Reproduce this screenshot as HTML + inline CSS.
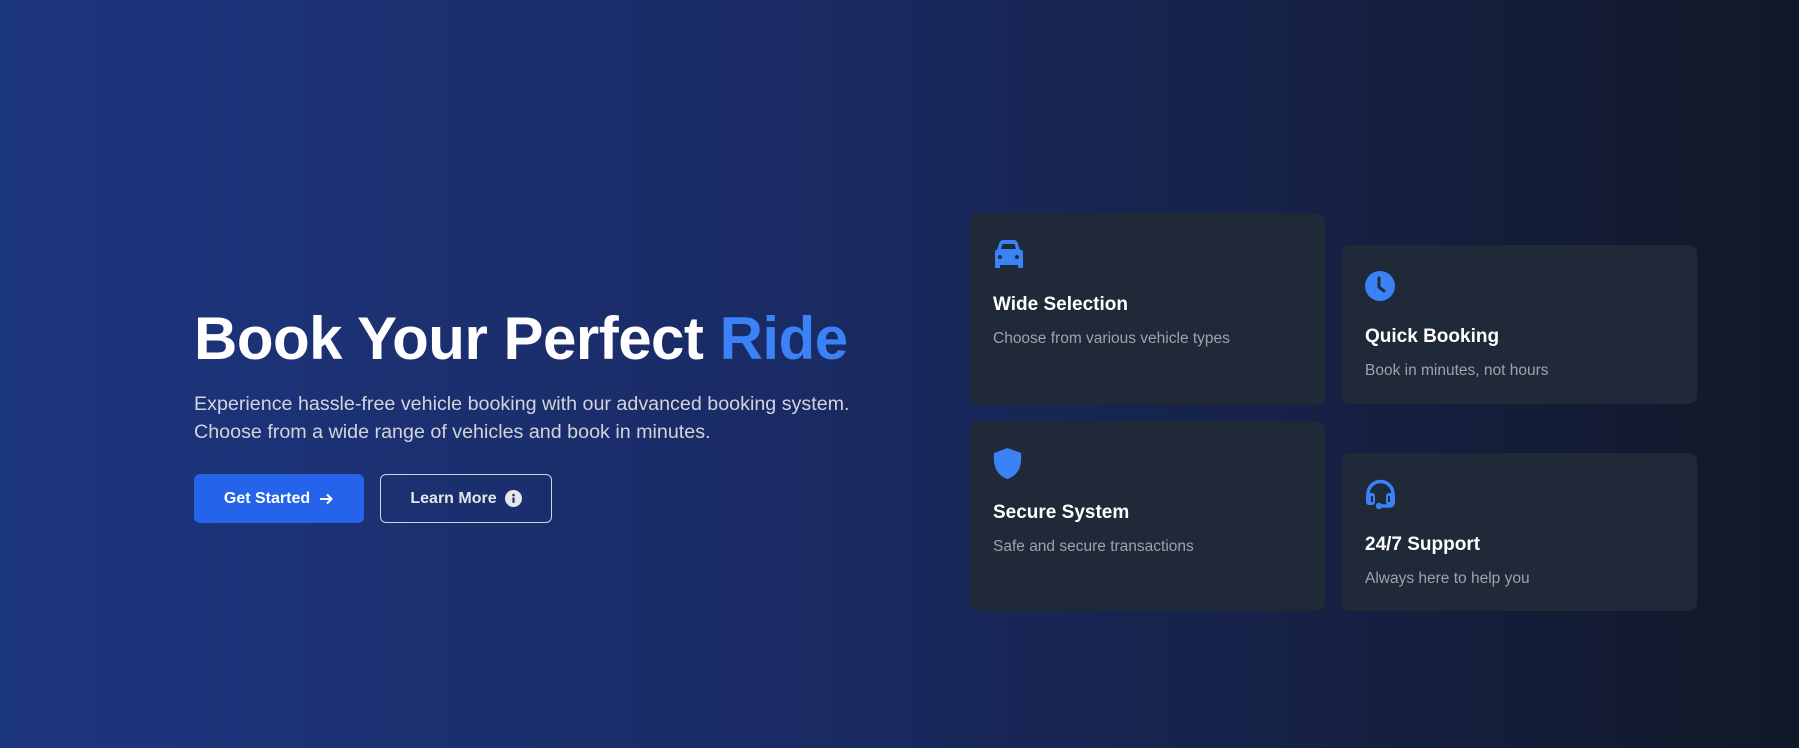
<!DOCTYPE html>
<html><head><meta charset="utf-8"><style>
*{margin:0;padding:0;box-sizing:border-box}
body{width:1799px;height:748px;overflow:hidden;background:linear-gradient(90deg,#1d3680 0%,#1a2a63 45%,#111827 100%);font-family:"Liberation Sans",sans-serif;position:relative}
h1{position:absolute;left:194px;top:304px;font-size:60px;font-weight:bold;color:#fff;letter-spacing:-0.5px;white-space:nowrap}
h1 span{color:#3b82f6}
p.lead{position:absolute;left:194px;top:391px;font-size:19.7px;line-height:27.5px;color:#d1d5db}
.btn{position:absolute;top:474px;height:49px;border-radius:6px;font-size:16px;font-weight:bold;color:#fff;display:flex;align-items:center;justify-content:center;gap:8px}
.b1{left:194px;width:170px;background:#2563eb}
.b2{left:380px;width:172px;border:1px solid #cbd5e1;color:#e5e7eb}
.card{position:absolute;background:#1f2937;border-radius:8px;width:355px;padding:0 23px}
.card svg{position:absolute;left:23px}
.card h3{position:absolute;left:23px;font-size:19px;color:#fff;font-weight:bold}
.card p{position:absolute;left:23px;font-size:15.5px;color:#9ca3af}
</style></head><body>
<h1>Book Your Perfect <span>Ride</span></h1>
<p class="lead">Experience hassle-free vehicle booking with our advanced booking system.<br>Choose from a wide range of vehicles and book in minutes.</p>
<div class="btn b1">Get Started <svg width="16" height="16" viewBox="0 0 16 16"><path d="M2 8h11M9 3.5L13.5 8 9 12.5" stroke="#fff" stroke-width="2" fill="none"/></svg></div>
<div class="btn b2">Learn More <svg width="17" height="17" viewBox="0 0 16 16"><circle cx="8" cy="8" r="8" fill="#e5e7eb"/><rect x="7" y="7" width="2" height="5" fill="#1e2d6a"/><circle cx="8" cy="4.7" r="1.2" fill="#1e2d6a"/></svg></div>

<div class="card" style="left:970px;top:213px;height:192px">
<svg style="top:27px" width="31" height="28" viewBox="0 0 31 28"><path d="M6 4Q7 0 10 0h11q3 0 4 4l2 6h1q2 0 2 2v16h-5v-3H7v3H2V12q0-2 2-2h0z" fill="#3b82f6"/><path d="M9.5 4h12l1.5 5h-15z" fill="#1f2937"/><circle cx="7" cy="17" r="2" fill="#1f2937"/><circle cx="24" cy="17" r="2" fill="#1f2937"/></svg>
<h3 style="top:81px">Wide Selection</h3><p style="top:117px">Choose from various vehicle types</p></div>

<div class="card" style="left:1342px;top:245px;height:159px">
<svg style="top:26px" width="30" height="30" viewBox="0 0 30 30"><circle cx="15" cy="15" r="15" fill="#3b82f6"/><path d="M14 7v9l5 4" stroke="#1f2937" stroke-width="3" fill="none" stroke-linecap="round"/></svg>
<h3 style="top:81px">Quick Booking</h3><p style="top:117px">Book in minutes, not hours</p></div>

<div class="card" style="left:970px;top:421px;height:190px">
<svg style="top:27px" width="29" height="31" viewBox="0 0 29 31"><path d="M14.5 0L28 5q1 12-3 18-4 6-10.5 8Q8 29 4 23 0 17 1 5z" fill="#3b82f6"/></svg>
<h3 style="top:81px">Secure System</h3><p style="top:117px">Safe and secure transactions</p></div>

<div class="card" style="left:1342px;top:453px;height:158px">
<svg style="top:26px" width="31" height="32" viewBox="0 0 31 32"><path d="M3 17V15a12.5 12.5 0 0 1 25 0v8q0 4-4 4h-8" stroke="#3b82f6" stroke-width="3.5" fill="none"/><rect x="1" y="14" width="9" height="12" rx="3" fill="#3b82f6"/><rect x="21" y="14" width="9" height="12" rx="3" fill="#3b82f6"/><rect x="6" y="17" width="2" height="6" fill="#1f2937"/><rect x="23" y="17" width="2" height="6" fill="#1f2937"/><circle cx="14" cy="27" r="3.2" fill="#3b82f6"/></svg>
<h3 style="top:81px">24/7 Support</h3><p style="top:117px">Always here to help you</p></div>
</body></html>
